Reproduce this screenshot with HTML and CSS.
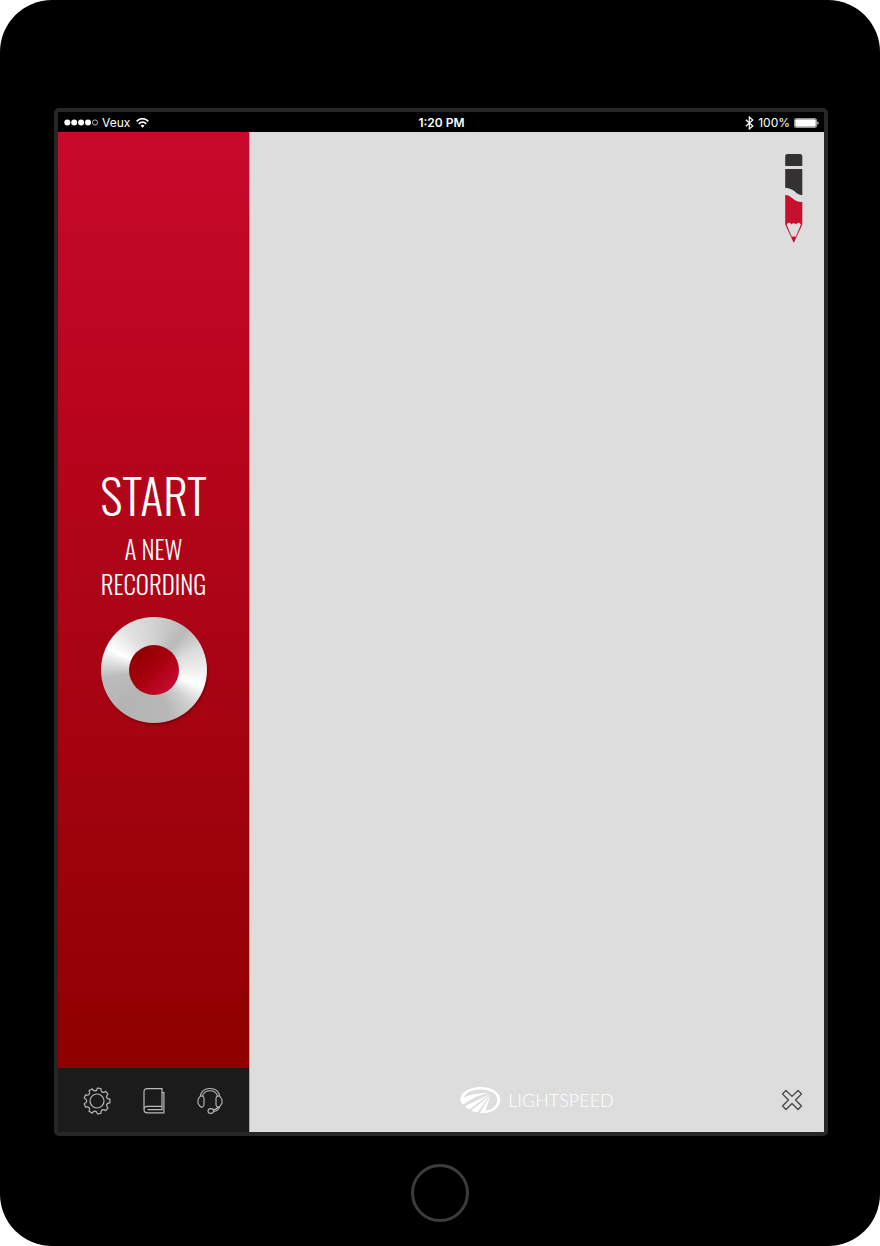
FILE: index.html
```html
<!DOCTYPE html>
<html lang="en">
<head>
<meta charset="utf-8">
<meta name="viewport" content="width=device-width, initial-scale=1">
<title>Lightspeed Recorder</title>
<link rel="stylesheet" href="styles.css">
</head>
<body>
<div class="tablet">
  <div class="screen">
    <header class="status">
      <div class="status-left">
        <svg width="35" height="8" viewBox="0 0 35 8" aria-hidden="true"><g fill="#fff"><circle cx="3.3" cy="3.500" r="3"/><circle cx="10.2" cy="3.500" r="3"/><circle cx="17.1" cy="3.500" r="3"/><circle cx="24" cy="3.500" r="3"/></g><circle cx="31" cy="3.500" r="2.6" fill="none" stroke="#fff" stroke-width=".7"/></svg>
        <span>Veux</span>
        <svg class="wifi" width="13" height="10" viewBox="0 0 13 10" aria-hidden="true"><g fill="none" stroke="#fff" stroke-width="1.7"><path d="M.7 3.4C4-.2 9-.2 12.3 3.4"/><path d="M2.8 5.8c2.2-2.3 5.2-2.3 7.4 0"/></g><path d="M4.5 7.6c1.2-1.1 2.8-1.1 4 0l-2 2.2z" fill="#fff"/></svg>
      </div>
      <time class="clock">1:20 PM</time>
      <div class="status-right">
        <svg width="9" height="14" viewBox="0 0 9 14" aria-hidden="true"><path d="M.8 3.8l7 6.2-3.5 3V1l3.5 3-7 6.2" fill="none" stroke="#fff" stroke-width="1.2"/></svg>
        <span>100%</span>
        <svg width="25" height="10" viewBox="0 0 25 10" aria-hidden="true"><rect x=".5" y=".5" width="22" height="9" rx="1.5" fill="none" stroke="#bbb" stroke-width=".8"/><rect x="1.2" y="1.2" width="20.6" height="7.6" rx="1" fill="#fff"/><path d="M23.4 3.2c1.5.4 1.5 3.2 0 3.6z" fill="#fff"/></svg>
      </div>
    </header>
    <div class="app">
      <aside class="sidebar">
        <section class="record">
          <h1 class="title">START</h1>
          <p class="subtitle">A NEW<br>RECORDING</p>
          <button class="record-button" type="button" aria-label="Start a new recording"><span class="record-core"></span></button>
        </section>
        <nav class="tools" aria-label="Tools">
          <button class="tool" type="button" aria-label="Settings">
            <svg width="28" height="28" viewBox="0 0 28 28"><g fill="none" stroke="#b9b9b9" stroke-width="1.2" stroke-linejoin="round"><circle cx="14" cy="14" r="7"/><path d="M14.5 1L18 1.6C17.6 5.2 19.8 6.5 22.7 4.3L25 7.1C22.4 9.5 23.3 12 26.9 12.2V15.8C23.3 16 22.4 18.5 25 20.9L22.7 23.7C19.8 21.5 17.6 22.8 18 26.4L14.5 27C13.7 23.5 11.1 23 9.1 26.1L6 24.2C7.6 21.1 5.9 19 2.5 20.1L1.3 16.7C4.6 15.3 4.6 12.7 1.3 11.3L2.5 7.9C5.9 9 7.6 6.9 6 3.8L9.1 1.9C11.1 5 13.7 4.5 14.5 1Z"/></g></svg>
          </button>
          <button class="tool" type="button" aria-label="Manual">
            <svg width="28" height="28" viewBox="0 0 28 28"><path d="M7 1.6h15v17.8H7.2A3.2 3.2 0 0 0 4 22.6V4.6a3 3 0 0 1 3-3zM4 22.6a3.3 3.3 0 0 0 3.3 3.3h16.6V5.7H22M22 19.4v3.3H7.5" fill="none" stroke="#b9b9b9" stroke-width="1.2"/></svg>
          </button>
          <button class="tool" type="button" aria-label="Support">
            <svg width="28" height="28" viewBox="0 0 28 28"><g fill="none" stroke="#b9b9b9" stroke-width="1.1" stroke-linejoin="round"><path d="M4.2 9.3C5.3 4 9.2 1.5 14 1.5S22.7 4 23.8 9.3M6.5 9.1C7.5 5.5 10.2 3.7 14 3.7s6.5 1.8 7.5 5.4"/><path d="M4.2 9.3c1.8-.8 3.8.1 3.8 2.2v6.1c0 2.5-2.6 3.4-4 1.6L2 16.5v-4zM23.8 9.3c-1.8-.8-3.8.1-3.8 2.2v6.1c0 2.5 2.6 3.4 4 1.6l2-2.7v-4z"/><path d="M23.6 19.6c-.5 2.8-3 4.4-6.3 4.9M22 20c-.8 1.7-2.3 2.4-4.8 2.7"/><ellipse cx="14.8" cy="24" rx="2.8" ry="2.4"/></g></svg>
          </button>
        </nav>
      </aside>
      <main class="canvas">
        <button class="pencil" type="button" aria-label="Draw">
          <svg width="18" height="90" viewBox="0 0 18 90"><path d="M2.5 0h12.5a2.3 2.3 0 0 1 2.3 2.3V12H.2V2.3A2.3 2.3 0 0 1 2.5 0zM.2 15h17.1v26.3C10.5 41 10 34.4.2 33.8z" fill="#333132"/><path d="M.2 41C7 41 8 48.2 17.3 48v22.5L8.8 89 .2 70.5z" fill="#c8102e"/><path d="M1.6 70.5c1.5-2.5 4-2.1 4.6 0 1.7-1.8 3.6-1.8 5.3 0 .6-2.1 3.1-2.5 4.4 0l-5.2 12.4c-1.2-.6-2.6-.6-3.8 0z" fill="#ddd"/></svg>
        </button>
        <footer class="canvas-footer">
          <div class="brand">
            <svg width="41" height="28" viewBox="0 0 41 28" aria-hidden="true"><g fill="#fff"><path d="M.3 14C.3 6.5 9 1 20.3 1s20 5.3 20 12.8S33 27 23.5 27l1.2-2.2c7.3-.5 12.6-5 12.6-11 0-6.3-7-10.4-17-10.4C11.5 3.4 4.5 7 3.2 13z"/><path d="M.3 13.5C5 10 15 7 30 6.8 19 9 9.5 13.5 3.500 18.8 1.5 17.3.4 15.5.3 13.5z"/><path d="M30 8L4.8 20.3c1.2 1.3 2.7 2.4 4.5 3.3z"/><path d="M30.3 9L11.3 24.7c1.9.8 3.9 1.4 6 1.7z"/><path d="M30.5 10L19.8 26.7c1.8.3 3.4.3 4.9 0z"/></g></svg>
            <span>LIGHTSPEED</span>
          </div>
          <button class="close" type="button" aria-label="Close">
            <svg width="22" height="22" viewBox="0 0 22 22"><path d="M5 1.5L11 7.4l6-5.9L20.5 5l-6 6 6 6-3.5 3.5-6-6-6 6L1.5 17l6-6-6-6z" fill="none" stroke="#444" stroke-width="1.3" stroke-linejoin="round"/></svg>
          </button>
        </footer>
      </main>
    </div>
  </div>
  <button class="home" type="button" aria-label="Home"></button>
</div>
</body>
</html>
```

FILE: styles.css
```css
* { box-sizing: border-box; }

body {
  margin: 0;
  background: #fff;
  font-family: Inter, "Liberation Sans", sans-serif;
}

button {
  display: block;
  padding: 0;
  border: 0;
  background: none;
  cursor: pointer;
}

svg { display: block; }

.tablet {
  display: flex;
  flex-direction: column;
  min-height: 100vh;
  padding: 108px 52px 24px 54px;
  border-radius: 52px;
  background: #000;
}

.screen {
  flex: 1;
  display: flex;
  flex-direction: column;
  border: 4px solid #262727;
  border-radius: 5px;
}

.status {
  display: grid;
  grid-template-columns: 1fr auto 1fr;
  align-items: center;
  height: 20px;
  padding: 1px 5px 0 6px;
  background: #000;
  color: #fff;
  font-size: 12px;
  line-height: 19px;
}

.status-left,
.status-right {
  display: flex;
  align-items: center;
  gap: 3px;
}

.status-right {
  gap: 4px;
  justify-content: flex-end;
}

.wifi { margin-left: 3px; }
.clock { font-weight: 600; }

.app {
  flex: 1;
  display: grid;
  grid-template-columns: 192px 1fr;
}

.sidebar {
  display: flex;
  flex-direction: column;
  border-right: 1px solid #b9a5a5;
  background: #1b1b1b;
}

.record {
  flex: 1;
  display: flex;
  flex-direction: column;
  align-items: center;
  justify-content: center;
  padding-bottom: 18px;
  background: linear-gradient(#c8092c, #b8051d 30%, #a90414 56%, #8f0000);
  color: #fff;
  font-family: Oswald, "Roboto Condensed", "Liberation Sans Narrow", sans-serif;
  font-weight: 300;
  text-align: center;
}

.title {
  margin: 0;
  font-size: 48px;
  font-weight: 300;
  line-height: 72px;
}

.subtitle {
  margin: 0 0 16px;
  font-size: 25px;
  line-height: 35px;
}

.record-button {
  display: grid;
  place-items: center;
  width: 106px;
  height: 106px;
  border-radius: 50%;
  background: conic-gradient(#d2d2d2, #b9b9b9 38deg, #dcdcdc 65deg, #efefef 90deg, #fff 108deg, #d0d0d0 133deg, #b8b8b8 160deg, #b4b4b4 220deg, #bcbcbc 262deg, #fff 295deg, #e2e2e2 325deg, #d2d2d2);
  box-shadow: 1px 2px 2px #6009;
}

.record-core {
  width: 50px;
  height: 50px;
  border-radius: 50%;
  background: linear-gradient(135deg, #900000 15%, #a8000e 50%, #c50c30 85%);
}

.tools {
  display: flex;
  align-items: center;
  justify-content: space-between;
  height: 64px;
  padding: 2px 25px 0;
}

.canvas {
  display: flex;
  flex-direction: column;
  justify-content: space-between;
  background: #ddd;
}

.pencil {
  align-self: flex-end;
  margin: 22px 21px 0 0;
}

.canvas-footer {
  display: grid;
  grid-template-columns: 1fr auto 1fr;
  align-items: center;
  height: 64px;
  padding: 0 21px;
}

.brand {
  grid-column: 2;
  display: flex;
  align-items: center;
  gap: 7px;
  color: #fff;
  font-family: Lato, sans-serif;
  font-size: 18px;
  font-weight: 300;
}

.close { justify-self: end; }

.home {
  align-self: center;
  width: 58px;
  height: 58px;
  margin: 28px 2px 0 0;
  border: 3px solid #3c3c3c;
  border-radius: 50%;
}
```
